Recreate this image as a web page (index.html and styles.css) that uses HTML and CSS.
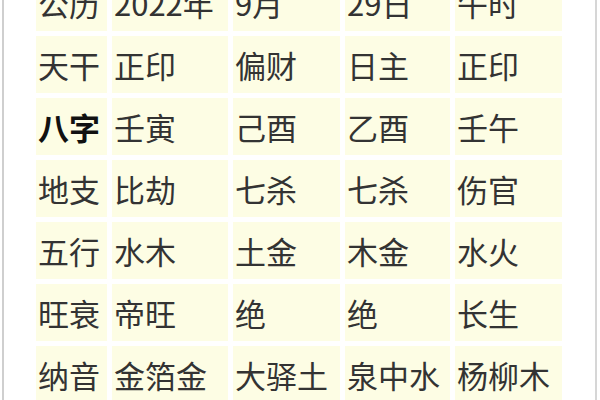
FILE: index.html
```html
<!DOCTYPE html>
<html lang="zh-CN">
<head>
<meta charset="utf-8">
<link rel="stylesheet" href="styles.css">
</head>
<body>
<div class="frame">
  <div class="grid">
    <div class="c">公历</div><div class="c">2022年</div><div class="c">9月</div><div class="c">29日</div><div class="c">午时</div>
    <div class="c">天干</div><div class="c">正印</div><div class="c">偏财</div><div class="c">日主</div><div class="c">正印</div>
    <div class="c b">八字</div><div class="c">壬寅</div><div class="c">己酉</div><div class="c">乙酉</div><div class="c">壬午</div>
    <div class="c">地支</div><div class="c">比劫</div><div class="c">七杀</div><div class="c">七杀</div><div class="c">伤官</div>
    <div class="c">五行</div><div class="c">水木</div><div class="c">土金</div><div class="c">木金</div><div class="c">水火</div>
    <div class="c">旺衰</div><div class="c">帝旺</div><div class="c">绝</div><div class="c">绝</div><div class="c">长生</div>
    <div class="c">纳音</div><div class="c">金箔金</div><div class="c">大驿土</div><div class="c">泉中水</div><div class="c">杨柳木</div>
  </div>
</div>
</body>
</html>
```
FILE: styles.css
```css
html, body {
  margin: 0;
  padding: 0;
  background: #ffffff;
  overflow: hidden;
}
.frame {
  width: 595px;
  height: 400px;
  margin-left: 2px;
  border-left: 2px solid #cfcfcf;
  border-right: 2px solid #d6d6d6;
  overflow: hidden;
  box-sizing: border-box;
}
.grid {
  display: grid;
  grid-template-columns: 71px 116px 107px 105px 107px;
  grid-auto-rows: 57px;
  gap: 5px;
  margin-top: -26px;
  margin-left: 32px;
}
.c {
  background: #fdfde4;
  font-family: "Noto Sans CJK SC", "Noto Sans", sans-serif;
  font-size: 31px;
  line-height: 57px;
  color: #333333;
  padding-left: 2px;
  white-space: nowrap;
}
.b {
  font-weight: bold;
  color: #111111;
}
```
